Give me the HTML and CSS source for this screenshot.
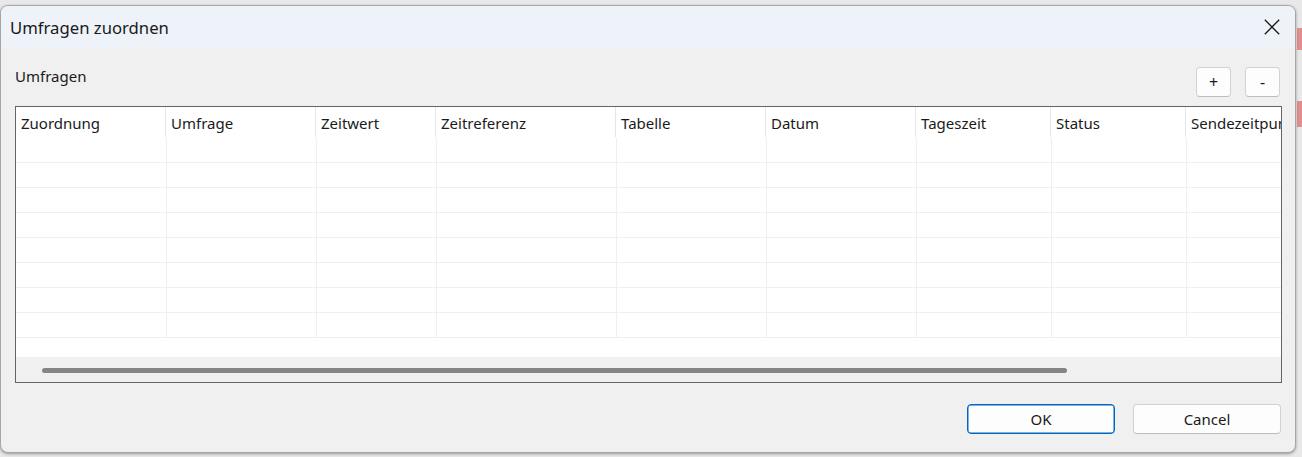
FILE: index.html
```html
<!DOCTYPE html>
<html lang="de">
<head>
<meta charset="utf-8">
<title>Umfragen zuordnen</title>
<link rel="stylesheet" href="styles.css">
</head>
<body>
<div class="dialog">
  <div class="titlebar">
    <span class="title">Umfragen zuordnen</span>
    <button class="close" aria-label="Schließen">
      <svg width="16" height="16" viewBox="0 0 16 16"><path d="M0.8 0.8 L15.2 15.2 M15.2 0.8 L0.8 15.2" stroke="#1b1b1b" stroke-width="1.3" fill="none"/></svg>
    </button>
  </div>
  <div class="content">
    <div class="toolbar">
      <span class="label">Umfragen</span>
      <div class="tools">
        <button class="tool">+</button>
        <button class="tool">-</button>
      </div>
    </div>
    <div class="grid">
      <div class="viewport">
        <div class="row head">
          <div class="cell c1">Zuordnung</div>
          <div class="cell c2">Umfrage</div>
          <div class="cell c3">Zeitwert</div>
          <div class="cell c4">Zeitreferenz</div>
          <div class="cell c5">Tabelle</div>
          <div class="cell c6">Datum</div>
          <div class="cell c7">Tageszeit</div>
          <div class="cell c8">Status</div>
          <div class="cell c9">Sendezeitpunkt</div>
        </div>
        <div class="row"><div class="cell c1"></div><div class="cell c2"></div><div class="cell c3"></div><div class="cell c4"></div><div class="cell c5"></div><div class="cell c6"></div><div class="cell c7"></div><div class="cell c8"></div><div class="cell c9"></div></div>
        <div class="row"><div class="cell c1"></div><div class="cell c2"></div><div class="cell c3"></div><div class="cell c4"></div><div class="cell c5"></div><div class="cell c6"></div><div class="cell c7"></div><div class="cell c8"></div><div class="cell c9"></div></div>
        <div class="row"><div class="cell c1"></div><div class="cell c2"></div><div class="cell c3"></div><div class="cell c4"></div><div class="cell c5"></div><div class="cell c6"></div><div class="cell c7"></div><div class="cell c8"></div><div class="cell c9"></div></div>
        <div class="row"><div class="cell c1"></div><div class="cell c2"></div><div class="cell c3"></div><div class="cell c4"></div><div class="cell c5"></div><div class="cell c6"></div><div class="cell c7"></div><div class="cell c8"></div><div class="cell c9"></div></div>
        <div class="row"><div class="cell c1"></div><div class="cell c2"></div><div class="cell c3"></div><div class="cell c4"></div><div class="cell c5"></div><div class="cell c6"></div><div class="cell c7"></div><div class="cell c8"></div><div class="cell c9"></div></div>
        <div class="row"><div class="cell c1"></div><div class="cell c2"></div><div class="cell c3"></div><div class="cell c4"></div><div class="cell c5"></div><div class="cell c6"></div><div class="cell c7"></div><div class="cell c8"></div><div class="cell c9"></div></div>
        <div class="row"><div class="cell c1"></div><div class="cell c2"></div><div class="cell c3"></div><div class="cell c4"></div><div class="cell c5"></div><div class="cell c6"></div><div class="cell c7"></div><div class="cell c8"></div><div class="cell c9"></div></div>
        <div class="row"><div class="cell c1"></div><div class="cell c2"></div><div class="cell c3"></div><div class="cell c4"></div><div class="cell c5"></div><div class="cell c6"></div><div class="cell c7"></div><div class="cell c8"></div><div class="cell c9"></div></div>
      </div>
      <div class="hscroll"><div class="thumb"></div></div>
    </div>
    <div class="actions">
      <button class="btn primary">OK</button>
      <button class="btn">Cancel</button>
    </div>
  </div>
</div>
</body>
</html>
```

FILE: styles.css
```css
* { box-sizing: border-box; }

html, body { margin: 0; padding: 0; }

body {
  width: 1302px;
  height: 457px;
  overflow: hidden;
  padding-top: 5px;
  font-family: "Noto Sans", "Open Sans", sans-serif;
  color: #1a1a1a;
  background:
    linear-gradient(#e38d8d, #e38d8d) 1297px 28px / 5px 22px no-repeat,
    linear-gradient(#e38d8d, #e38d8d) 1297px 101px / 5px 26px no-repeat,
    #e8e8e8;
}

button {
  font-family: inherit;
  color: inherit;
  cursor: default;
}

/* window frame */
.dialog {
  width: 1296px;
  height: 448px;
  border: 1px solid #a6a6a6;
  border-radius: 8px;
  background: #f0f0f0;
  box-shadow: 0 1px 3px rgba(0, 0, 0, 0.35);
  display: flex;
  flex-direction: column;
  overflow: hidden;
}

.titlebar {
  height: 42px;
  flex: none;
  background: #eef2f9;
  display: flex;
  align-items: center;
  justify-content: space-between;
  padding-left: 9px;
}

.title {
  font-size: 16.7px;
  line-height: 23px;
}

.close {
  width: 46px;
  height: 42px;
  border: 0;
  background: transparent;
  display: flex;
  align-items: center;
  justify-content: center;
  padding: 0;
}

.close svg { display: block; }

.content {
  flex: 1;
  display: flex;
  flex-direction: column;
  padding: 0 13px 18px 14px;
}

/* label + add/remove */
.toolbar {
  display: flex;
  justify-content: space-between;
  align-items: flex-start;
  height: 49px;
  margin-bottom: 9px;
}

.label {
  margin-top: 18px;
  font-size: 15px;
  line-height: 20px;
}

.tools {
  margin-top: 19px;
  margin-right: 2px;
  display: flex;
  gap: 14px;
}

.tool {
  width: 35px;
  height: 30px;
  padding: 0;
  background: #fdfdfd;
  border: 1px solid #d2d2d2;
  border-bottom-color: #bdbdbd;
  border-radius: 4px;
  font-size: 16px;
  line-height: 26px;
}

/* data grid */
.grid {
  height: 277px;
  border: 1px solid #646464;
  background: #f0f0f0;
  display: flex;
  flex-direction: column;
  overflow: hidden;
}

.viewport {
  height: 250px;
  background: #ffffff;
  overflow: hidden;
}

.row {
  display: flex;
  height: 25px;
  padding-left: 1px;
  border-bottom: 1px solid #efefef;
}

.row.head {
  height: 31px;
  padding-left: 0;
  border-bottom: 0;
}

.cell {
  flex: none;
  height: 100%;
  border-right: 1px solid #efefef;
  padding: 4px 0 0 5px;
  font-size: 15px;
  line-height: 25px;
  white-space: nowrap;
  overflow: hidden;
}

.head .cell {
  height: 30px;
  border-right-color: #e6e6e6;
}

.c1 { width: 150px; }
.c2 { width: 150px; }
.c3 { width: 120px; }
.c4 { width: 180px; }
.c5 { width: 150px; }
.c6 { width: 150px; }
.c7 { width: 135px; }
.c8 { width: 135px; }
.c9 { width: 150px; }

.hscroll {
  flex: 1;
  padding: 11px 0 0 26px;
}

.thumb {
  width: 1025px;
  height: 5px;
  border-radius: 3px;
  background: #858585;
}

/* dialog buttons */
.actions {
  margin-top: 21px;
  margin-right: 1px;
  display: flex;
  justify-content: flex-end;
  gap: 18px;
}

.btn {
  width: 148px;
  height: 30px;
  padding: 0;
  background: #fdfdfd;
  border: 1px solid #d0d0d0;
  border-bottom-color: #bcbcbc;
  border-radius: 4px;
  font-size: 15px;
  line-height: 26px;
}

.btn.primary {
  border: 1px solid #0067c0;
  box-shadow: inset 0 0 0 0.5px #0067c0;
}
```
